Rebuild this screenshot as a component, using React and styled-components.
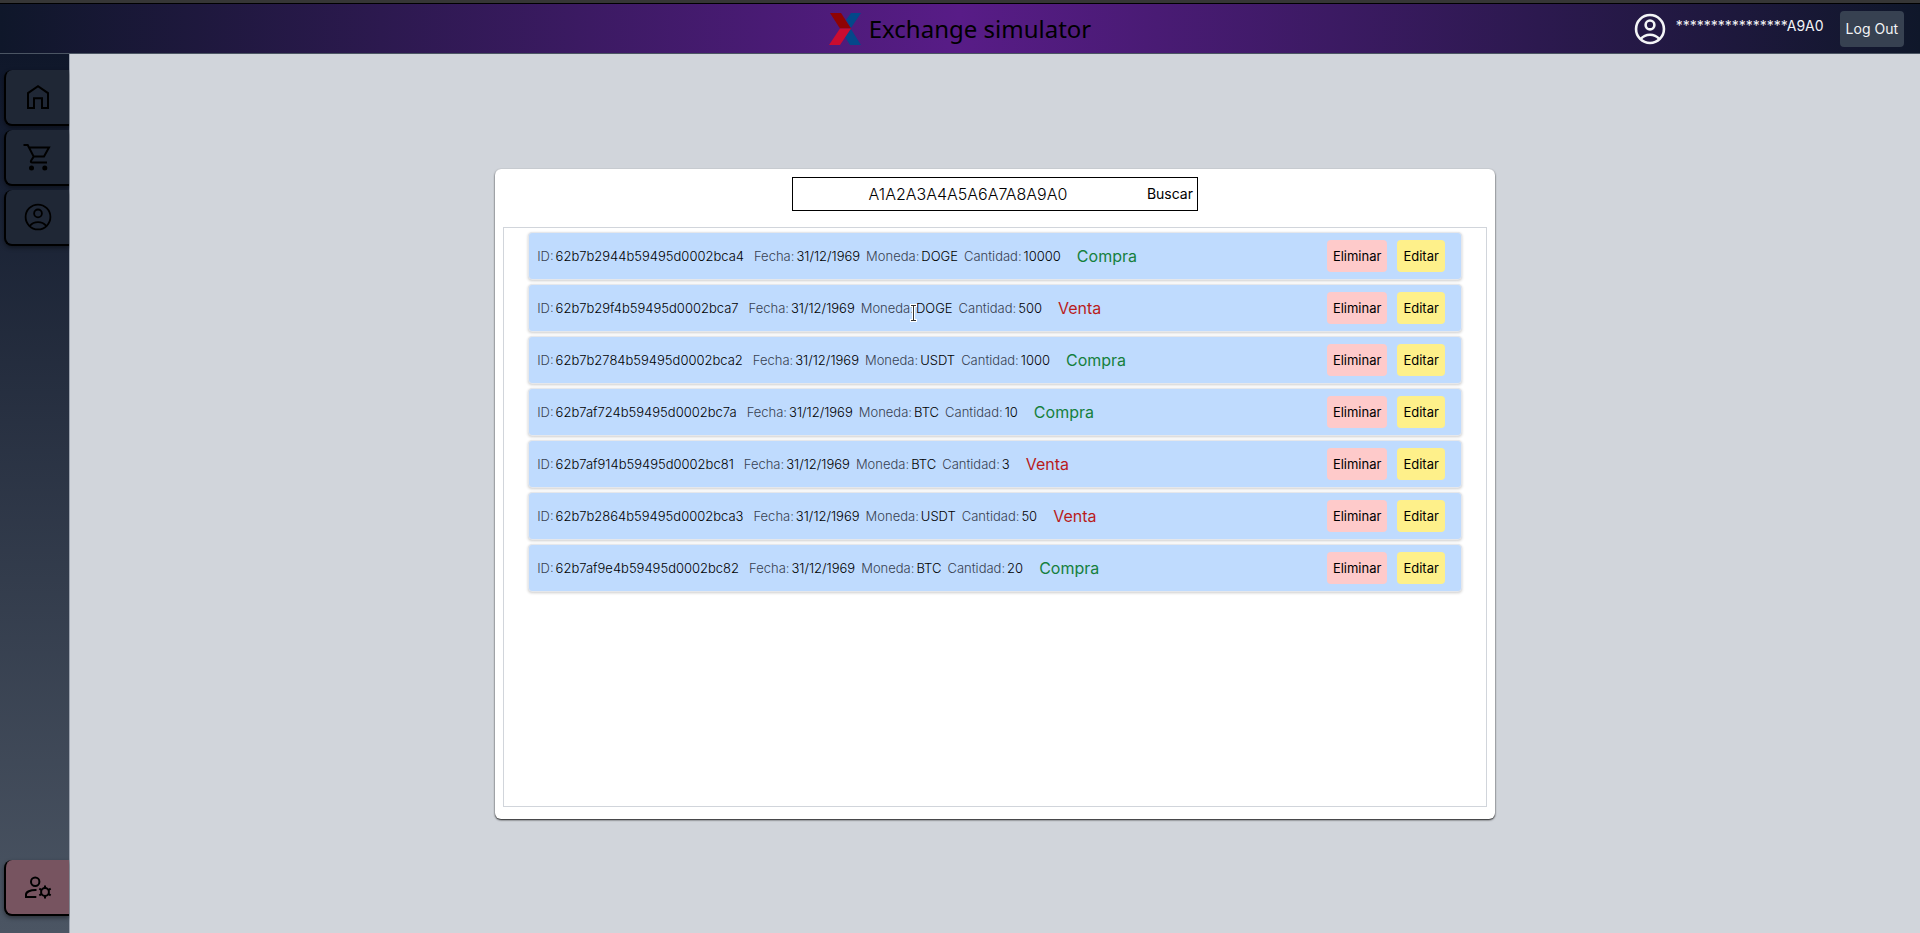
import React from "react";
import styled, { createGlobalStyle } from "styled-components";

const GlobalStyle = createGlobalStyle`
  *, *::before, *::after { box-sizing: border-box; }
  body { margin: 0; font-family: Inter, "Liberation Sans", sans-serif; font-size: 14px; font-weight: 400; line-height: 24px; color: #000; }
  button, input { font: inherit; color: inherit; border: 0; margin: 0; padding: 0; background: none; }
  button { cursor: pointer; }
  ul { list-style: none; margin: 0; padding: 0; }
  h1 { margin: 0; }
  svg { display: block; flex: none; }
`;

const Page = styled.div`
  min-height: 100vh;
  display: flex;
  flex-direction: column;
  border-top: 3px solid #363636;
`;

const Header = styled.header`
  display: grid;
  grid-template-columns: 1fr auto 1fr;
  align-items: center;
  height: 51px;
  padding: 0 16px;
  border-top: 1px solid #000;
  border-bottom: 1px solid #4b5563;
  background: linear-gradient(to right, #0f172a, #581c87, #0f172a);
`;

const Brand = styled.div`
  grid-column: 2;
  display: flex;
  align-items: center;
  gap: 8px;
`;

const Title = styled.h1`
  font-family: "Noto Sans", sans-serif;
  font-size: 24px;
  line-height: 32px;
  font-weight: 400;
`;

const Session = styled.div`
  justify-self: end;
  display: flex;
  align-items: flex-start;
  color: #f3f4f6;
`;

const AccountId = styled.span`
  margin: 0 16px 0 8px;
  line-height: 30px;
`;

const LogOut = styled.button`
  padding: 6px;
  border-radius: 4px;
  background: #374151;
`;

const Body = styled.div`
  flex: 1;
  display: flex;
`;

const Sidebar = styled.nav`
  width: 70px;
  flex: none;
  display: flex;
  flex-direction: column;
  gap: 4px;
  padding: 16px 0 17px 4px;
  border-right: 1px solid #9ca3af;
  background: linear-gradient(#0f172a, #4b5563);
`;

const SideLink = styled.a`
  display: flex;
  align-items: center;
  justify-content: center;
  height: 56px;
  margin-top: ${(p) => (p.$admin ? "auto" : 0)};
  border: solid #000;
  border-width: 0 0 2px 2px;
  border-radius: 8px 0 0 8px;
  background: ${(p) => (p.$admin ? "#775460" : "#1f2735")};
  color: #000;
  box-shadow: 0 2px 4px rgba(0, 0, 0, 0.4);
`;

const Main = styled.main`
  flex: 1;
  display: flex;
  align-items: center;
  justify-content: center;
  padding-top: 1px;
  background: #d1d5db;
`;

const Card = styled.section`
  display: flex;
  flex-direction: column;
  gap: 16px;
  width: 54.1%;
  min-width: 900px;
  height: 74%;
  padding: 8px 8px 12px;
  border-radius: 6px;
  background: #fff;
  box-shadow: 0 1px 2px rgba(0, 0, 0, 0.9);
`;

const Search = styled.form`
  align-self: center;
  display: flex;
  width: 406px;
  height: 34px;
  border: 1px solid #000;
`;

const SearchInput = styled.input`
  flex: 1;
  min-width: 0;
  text-align: center;
  font-size: 16px;
  font-weight: 300;
  outline: 0;
`;

const SearchButton = styled.button`
  padding: 0 4px;
`;

const List = styled.ul`
  flex: 1;
  display: flex;
  flex-direction: column;
  align-items: center;
  gap: 4px;
  padding: 4px 0;
  border: 1px solid #d1d5db;
`;

const Row = styled.li`
  display: flex;
  align-items: center;
  width: 95%;
  height: 48px;
  padding: 0 16px 0 8px;
  border: 1px solid #e5e7eb;
  border-radius: 4px;
  background: #bfdbfe;
  box-shadow: 0 1px 3px rgba(0, 0, 0, 0.2);
  font-size: 13px;
  line-height: 20px;
`;

const Data = styled.span`
  position: relative;
  display: flex;
  gap: 2px;
  margin-right: ${(p) => (p.$wide ? 10 : 6)}px;
  color: #374151;
  font-weight: 300;
  white-space: nowrap;
`;

const Value = styled.span`
  color: #000;
`;

const Kind = styled.span`
  margin: 0 auto 0 10px;
  font-size: 16px;
  line-height: 24px;
  color: ${(p) => (p.$buy ? "#15803d" : "#b91c1c")};
`;

const Action = styled.button`
  margin-left: 10px;
  padding: 6px;
  border-radius: 4px;
  background: ${(p) => (p.$danger ? "#fecaca" : "#fef08a")};
`;

const TextCursor = styled.svg`
  position: absolute;
  left: 49px;
  top: 6px;
`;

const Logo = () => (
  <svg width="32" height="32" viewBox="0 0 32 32" aria-hidden="true">
    <path fill="#04488a" d="M22 0h10L22 15l-5-8zM22 16l10 16H21l-5-8z" />
    <path fill="#8f0303" d="M1 0h11l10 15.5H11z" />
    <path fill="#cb0c30" d="M11 15.5h11L11 32H0z" />
  </svg>
);

const Icon = ({ size = 32, stroke = 2, children }) => (
  <svg width={size} height={size} viewBox="0 0 32 32" fill="none" stroke="currentColor" strokeWidth={stroke} aria-hidden="true">
    {children}
  </svg>
);

const HomeIcon = () => (
  <Icon>
    <path d="M6 27V12.1L16 5.2l10 6.9V27h-6v-9.8h-8V27z" />
  </Icon>
);

const CartIcon = () => (
  <Icon>
    <path d="M1.5 4h4.2l6 11.6L9.2 19.4c-.8 1.4-.2 2.1 1 2.1H25M6.8 6.5H27l-5 9.1H11.7" />
    <circle cx="9.5" cy="27" r="2.5" fill="currentColor" stroke="none" />
    <circle cx="22.8" cy="27" r="2.5" fill="currentColor" stroke="none" />
  </Icon>
);

const AccountIcon = ({ size, stroke = 1.8 }) => (
  <Icon size={size} stroke={stroke}>
    <circle cx="16" cy="16" r="12.4" />
    <circle cx="16" cy="12.4" r="3.9" />
    <path d="M7.8 24.8c4.2-5 12.2-5 16.4 0" />
  </Icon>
);

const AdminIcon = () => (
  <Icon>
    <circle cx="13.2" cy="10.8" r="4.2" />
    <path d="M14.5 19C8 18.8 4 21 4 23.6V26h10.3" />
    <circle cx="23" cy="21" r="3.9" />
    <path d="M23 17.2v-2.8M23 24.8v2.8M19.7 19.1l-2.4-1.4M26.3 22.9l2.4 1.4M19.7 22.9l-2.4 1.4M26.3 19.1l2.4-1.4" />
  </Icon>
);

const Pointer = () => (
  <TextCursor width="7" height="18" viewBox="0 0 7 18" fill="none" aria-hidden="true">
    <path stroke="#fff" strokeWidth="3" d="M0 1.5h7M0 16.5h7M3.5 1v16" />
    <path stroke="#333" d="M1 1.5h5M1 16.5h5M3.5 2v14" />
  </TextCursor>
);

const orders = [
  ["62b7b2944b59495d0002bca4", "DOGE", 10000, "Compra"],
  ["62b7b29f4b59495d0002bca7", "DOGE", 500, "Venta"],
  ["62b7b2784b59495d0002bca2", "USDT", 1000, "Compra"],
  ["62b7af724b59495d0002bc7a", "BTC", 10, "Compra"],
  ["62b7af914b59495d0002bc81", "BTC", 3, "Venta"],
  ["62b7b2864b59495d0002bca3", "USDT", 50, "Venta"],
  ["62b7af9e4b59495d0002bc82", "BTC", 20, "Compra"],
];

export default function App() {
  return (
    <Page>
      <GlobalStyle />
      <Header>
        <Brand>
          <Logo />
          <Title>Exchange simulator</Title>
        </Brand>
        <Session>
          <AccountIcon size={36} stroke={2.3} />
          <AccountId>****************A9A0</AccountId>
          <LogOut type="button">Log Out</LogOut>
        </Session>
      </Header>
      <Body>
        <Sidebar>
          <SideLink href="#home" aria-label="Inicio"><HomeIcon /></SideLink>
          <SideLink href="#shop" aria-label="Comprar"><CartIcon /></SideLink>
          <SideLink href="#account" aria-label="Cuenta"><AccountIcon /></SideLink>
          <SideLink href="#admin" aria-label="Administrar" $admin><AdminIcon /></SideLink>
        </Sidebar>
        <Main>
          <Card>
            <Search onSubmit={(e) => e.preventDefault()}>
              <SearchInput aria-label="Cuenta" defaultValue="A1A2A3A4A5A6A7A8A9A0" />
              <SearchButton type="submit">Buscar</SearchButton>
            </Search>
            <List>
              {orders.map(([id, coin, amount, kind], i) => (
                <Row key={id}>
                  <Data $wide>ID: <Value>{id}</Value></Data>
                  <Data>Fecha: <Value>31/12/1969</Value></Data>
                  <Data>Moneda: <Value>{coin}</Value>{i === 1 && <Pointer />}</Data>
                  <Data>Cantidad: <Value>{amount}</Value></Data>
                  <Kind $buy={kind === "Compra"}>{kind}</Kind>
                  <Action type="button" $danger>Eliminar</Action>
                  <Action type="button">Editar</Action>
                </Row>
              ))}
            </List>
          </Card>
        </Main>
      </Body>
    </Page>
  );
}
